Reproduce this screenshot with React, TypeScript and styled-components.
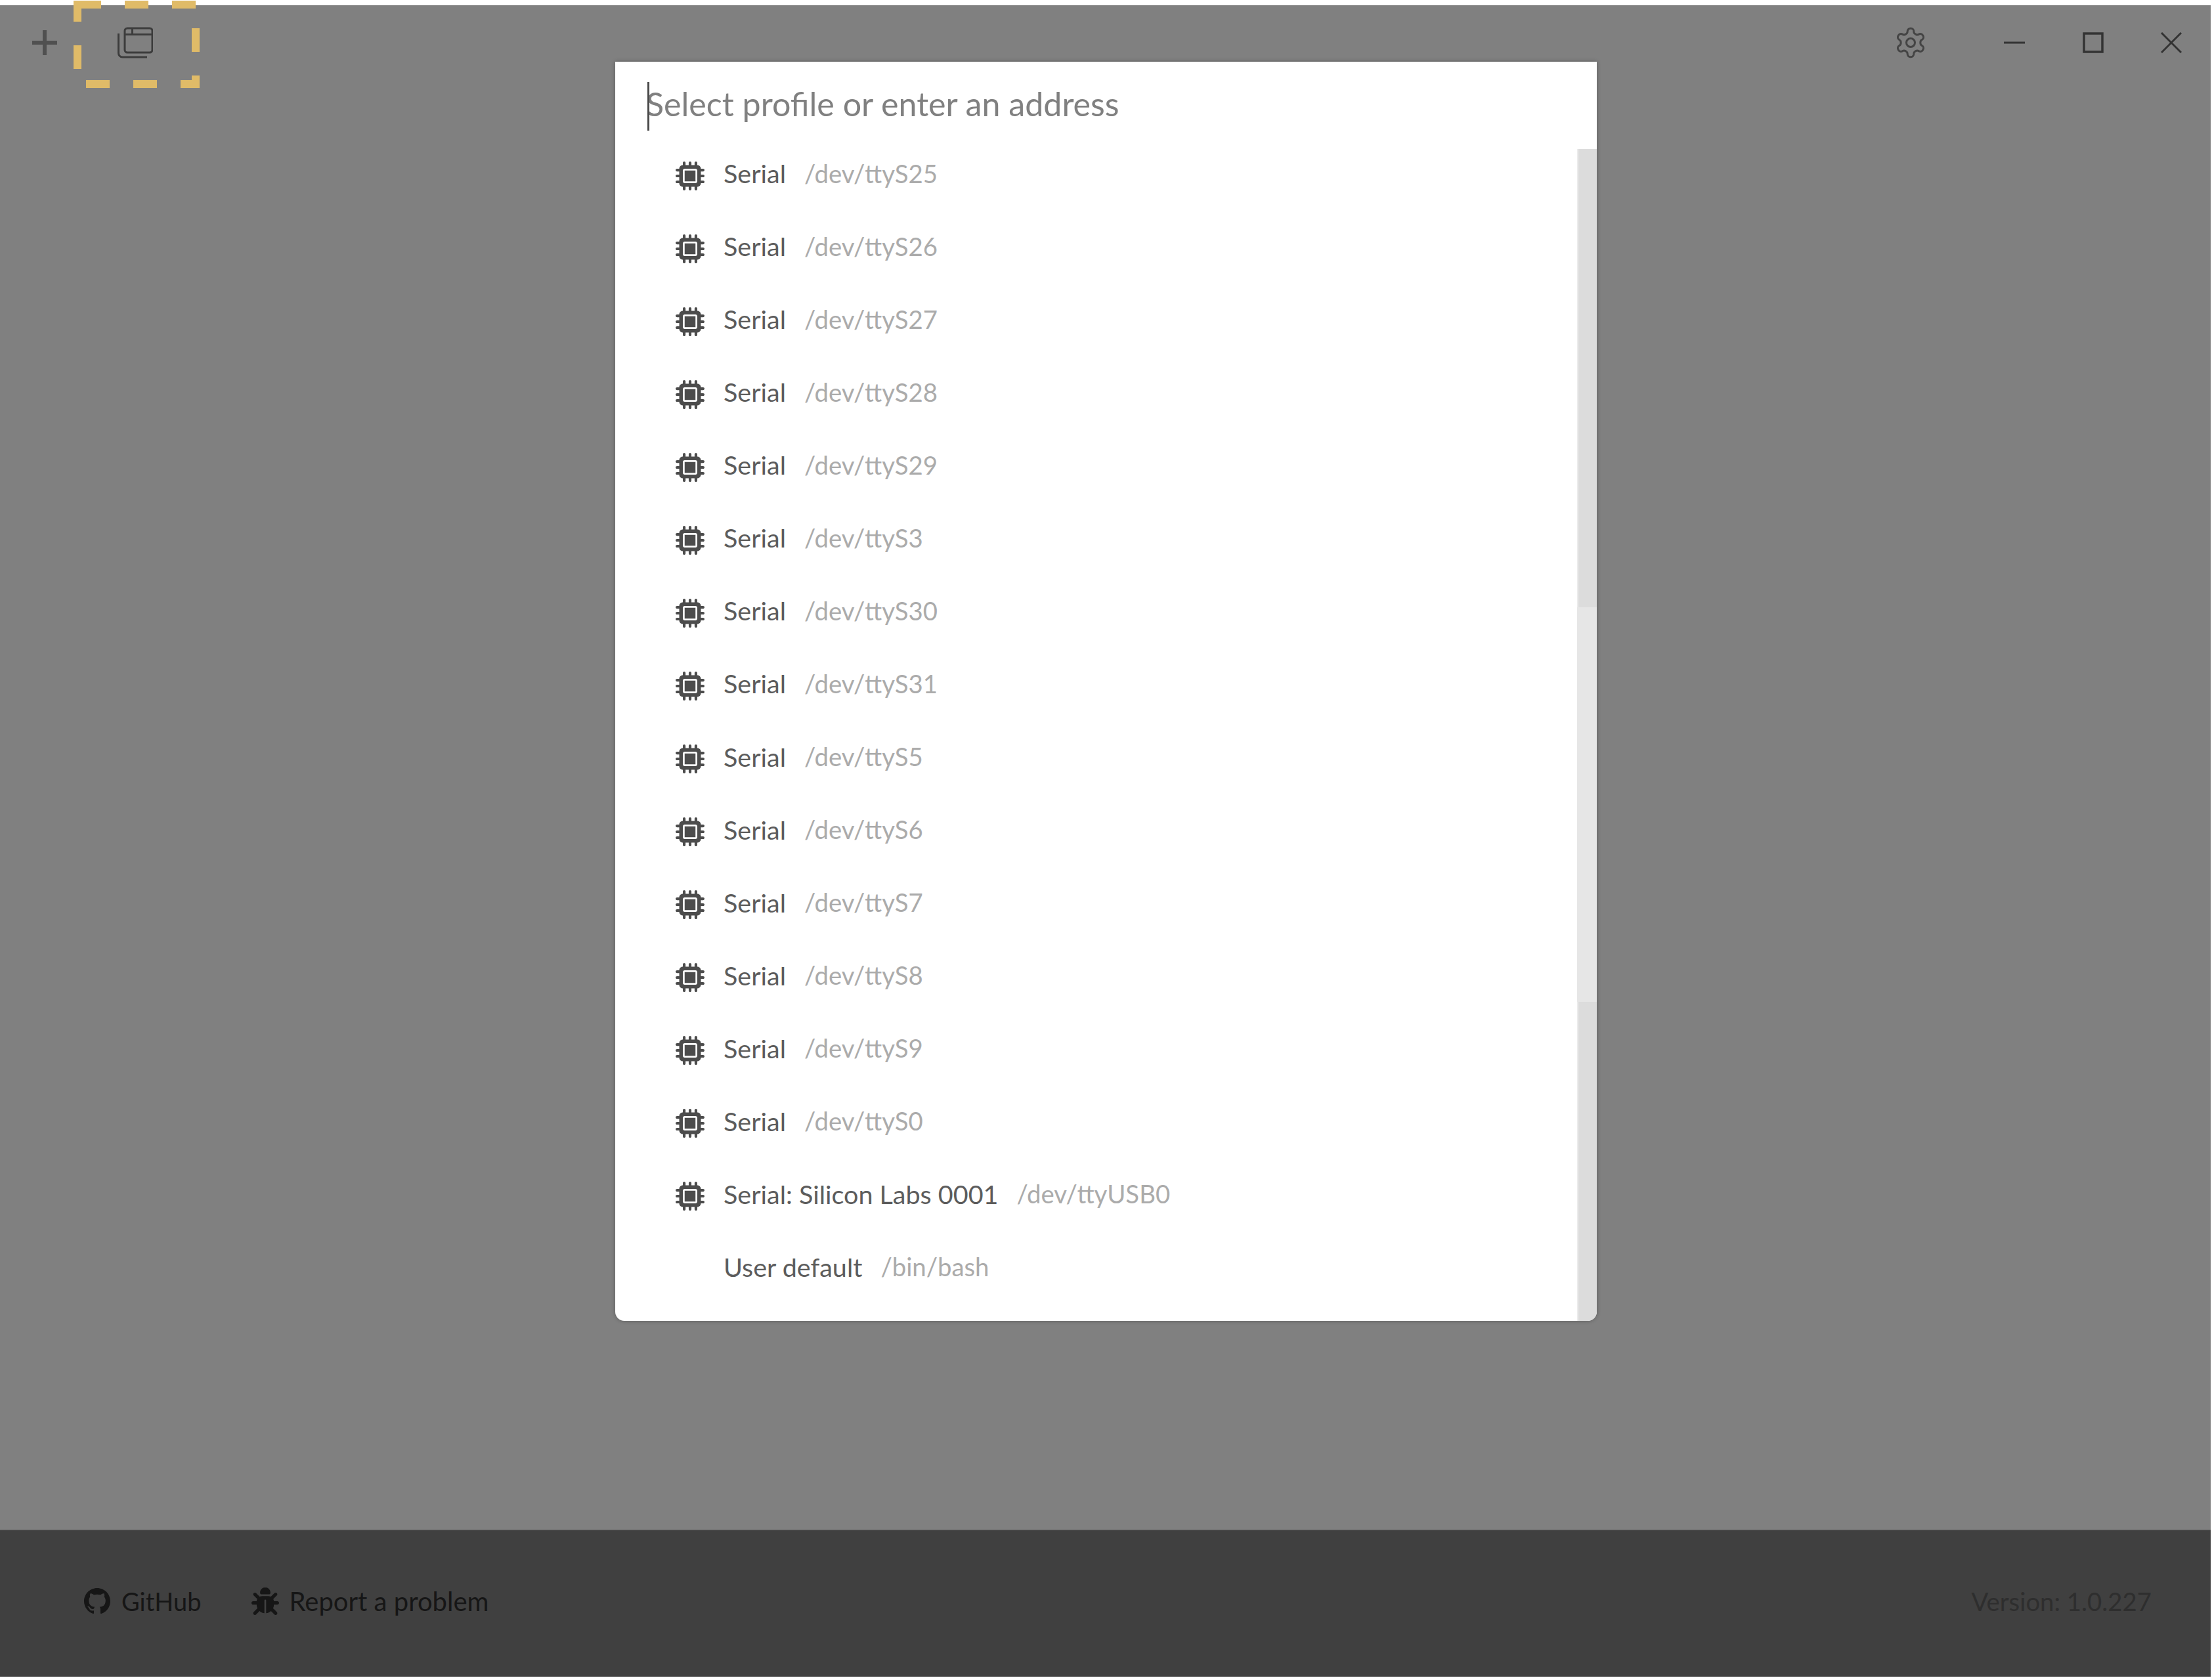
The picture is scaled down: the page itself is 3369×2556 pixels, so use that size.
import React from 'react';
import styled, { createGlobalStyle } from 'styled-components';
import { FaMicrochip, FaBug } from 'react-icons/fa6';
import { LuSettings } from 'react-icons/lu';

const FONT = `"Lato", "Noto Sans", sans-serif`;

const profiles = [
    ['Serial', '/dev/ttyS25'],
    ['Serial', '/dev/ttyS26'],
    ['Serial', '/dev/ttyS27'],
    ['Serial', '/dev/ttyS28'],
    ['Serial', '/dev/ttyS29'],
    ['Serial', '/dev/ttyS3'],
    ['Serial', '/dev/ttyS30'],
    ['Serial', '/dev/ttyS31'],
    ['Serial', '/dev/ttyS5'],
    ['Serial', '/dev/ttyS6'],
    ['Serial', '/dev/ttyS7'],
    ['Serial', '/dev/ttyS8'],
    ['Serial', '/dev/ttyS9'],
    ['Serial', '/dev/ttyS0'],
    ['Serial: Silicon Labs 0001', '/dev/ttyUSB0'],
];

export default function App() {
    return (
        <>
            <GlobalStyle />
            <AppWindow>
                <Toolbar>
                    <PlusButton>
                        <svg width="38" height="38" viewBox="0 0 38 38">
                            <path d="M19 0V38M0 19H38" stroke="#505050" strokeWidth="6" />
                        </svg>
                    </PlusButton>
                    <TabsButton>
                        <svg width="54" height="48" viewBox="0 0 54 48" fill="none" stroke="#3c3c3c" strokeWidth="3">
                            <rect x="11" y="2" width="42" height="37" rx="4" />
                            <path d="M11 11.5H53M22.5 2V11.5" />
                            <path d="M1.5 10V40a6 6 0 0 0 6 6H45" />
                        </svg>
                    </TabsButton>
                    <Spacer />
                    <GearButton>
                        <LuSettings size={52} strokeWidth={1.4} color="#444" />
                    </GearButton>
                    <ControlButton>
                        <svg width="32" height="4" viewBox="0 0 32 4">
                            <path d="M0 2H32" stroke="#333" strokeWidth="3" />
                        </svg>
                    </ControlButton>
                    <ControlButton>
                        <svg width="32" height="32" viewBox="0 0 32 32" fill="none">
                            <rect x="2" y="2" width="28" height="28" stroke="#333" strokeWidth="3.5" />
                        </svg>
                    </ControlButton>
                    <ControlButton>
                        <svg width="32" height="32" viewBox="0 0 32 32" fill="none">
                            <path d="M1 1L31 31M31 1L1 31" stroke="#333" strokeWidth="3" />
                        </svg>
                    </ControlButton>
                </Toolbar>
                <Content />
                <Footer>
                    <FooterLink $size={38} $gap={17}>
                        <svg width="40" height="40" viewBox="0 0 16 16" fill="currentColor">
                            <path d="M8 0C3.58 0 0 3.58 0 8c0 3.54 2.29 6.53 5.47 7.59.4.07.55-.17.55-.38 0-.19-.01-.82-.01-1.49-2.01.37-2.53-.49-2.69-.94-.09-.23-.48-.94-.82-1.13-.28-.15-.68-.52-.01-.53.63-.01 1.08.58 1.23.82.72 1.21 1.87.87 2.33.66.07-.52.28-.87.51-1.07-1.78-.2-3.64-.89-3.64-3.95 0-.87.31-1.59.82-2.15-.08-.2-.36-1.02.08-2.12 0 0 .67-.21 2.2.82.64-.18 1.32-.27 2-.27.68 0 1.36.09 2 .27 1.53-1.04 2.2-.82 2.2-.82.44 1.1.16 1.92.08 2.12.51.56.82 1.27.82 2.15 0 3.07-1.87 3.75-3.65 3.95.29.25.54.73.54 1.48 0 1.07-.01 1.93-.01 2.2 0 .21.15.46.55.38A8.013 8.013 0 0016 8c0-4.42-3.58-8-8-8z" />
                        </svg>
                        GitHub
                    </FooterLink>
                    <FooterLink $size={40} $gap={16}>
                        <FaBug size={42} />
                        Report a problem
                    </FooterLink>
                    <Spacer />
                    <Version>Version: 1.0.227</Version>
                </Footer>
                <Modal>
                    <QueryBar>
                        <Caret />
                        Select profile or enter an address
                    </QueryBar>
                    <ModalBody>
                        <ProfileList>
                            <ProfileRows>
                                {profiles.map(([name, path]) => (
                                    <ProfileRow key={path}>
                                        <ChipSlot>
                                            <FaMicrochip size={44} />
                                        </ChipSlot>
                                        <ProfileName>{name}</ProfileName>
                                        <ProfilePath>{path}</ProfilePath>
                                    </ProfileRow>
                                ))}
                                <ProfileRow>
                                    <ChipSlot />
                                    <ProfileName>User default</ProfileName>
                                    <ProfilePath>/bin/bash</ProfilePath>
                                </ProfileRow>
                            </ProfileRows>
                        </ProfileList>
                        <ScrollTrack>
                            <ScrollThumb />
                        </ScrollTrack>
                    </ModalBody>
                </Modal>
            </AppWindow>
            <HighlightFrame width="192" height="134" viewBox="0 0 192 134" fill="none">
                <rect x="6" y="6" width="180" height="121" stroke="#e0bb68" strokeWidth="12" strokeDasharray="36 36" />
            </HighlightFrame>
        </>
    );
}

const GlobalStyle = createGlobalStyle`
    html, body {
        margin: 0;
        padding: 0;
        background: #fff;
    }
`

const AppWindow = styled.div`
    position: relative;
    display: flex;
    flex-direction: column;
    width: 3367px;
    height: 2546px;
    margin-top: 8px;
    background: #808080;
    font-family: ${FONT};
`
const Toolbar = styled.div`
    display: flex;
    align-items: center;
    height: 114px;
    padding-left: 30px;
`
const IconButton = styled.div`
    display: flex;
    align-items: center;
    justify-content: center;
    height: 100%;
`
const PlusButton = styled(IconButton)`
    width: 76px;
`
const TabsButton = styled(IconButton)`
    width: 120px;
    margin-left: 40px;
`
const GearButton = styled(IconButton)`
    width: 120px;
    margin-right: 39px;
`
const ControlButton = styled(IconButton)`
    width: 119.5px;
`
const Spacer = styled.div`
    flex: 1;
`
const Content = styled.div`
    flex: 1;
`
const Footer = styled.div`
    display: flex;
    align-items: center;
    gap: 76px;
    height: 224px;
    padding: 0 90px 7px 128px;
    background: #404040;
    border-top: 1px solid #606060;
    box-sizing: border-box;
`
const FooterLink = styled.div<{ $size: number; $gap: number }>`
    display: flex;
    align-items: center;
    gap: ${p => p.$gap}px;
    font-size: ${p => p.$size}px;
    color: #161616;
`
const Version = styled.div`
    font-size: 38.3px;
    color: #2e2e2e;
`
const Modal = styled.div`
    position: absolute;
    top: 86px;
    left: 937px;
    display: flex;
    flex-direction: column;
    width: 1495px;
    height: 1918px;
    background: #fff;
    border-radius: 0 0 14px 14px;
    box-shadow: 0 0 6px rgba(0, 0, 0, 0.3);
    overflow: hidden;
`
const QueryBar = styled.div`
    position: relative;
    flex: none;
    display: flex;
    align-items: center;
    height: 133px;
    padding: 0 0 6px 47px;
    box-sizing: border-box;
    font-size: 50.15px;
    color: #808080;
`
const Caret = styled.span`
    position: absolute;
    left: 49px;
    top: 31px;
    width: 3px;
    height: 74px;
    background: #4a4a4a;
`
const ModalBody = styled.div`
    flex: 1;
    display: flex;
    min-height: 0;
`
const ProfileList = styled.div`
    flex: 1;
    overflow: hidden;
`
const ProfileRows = styled.div`
    margin-top: -19px;
`
const ProfileRow = styled.div`
    display: flex;
    align-items: center;
    height: 111.07px;
    font-size: 38.3px;
`
const ChipSlot = styled.div`
    display: flex;
    align-items: center;
    justify-content: center;
    width: 44px;
    height: 44px;
    margin: 8px 29px 0 92px;
    color: #4c4c4c;
`
const ProfileName = styled.span`
    font-size: 39.5px;
    color: #5c5c5c;
`
const ProfilePath = styled.span`
    margin-left: 28px;
    color: #ababab;
`
const ScrollTrack = styled.div`
    flex: none;
    width: 30px;
    padding-top: 698px;
    box-sizing: border-box;
    background: #dcdcdc;
    box-shadow: inset 2px 0 0 #ececec;
`
const ScrollThumb = styled.div`
    height: 601px;
    background: #e6e6e6;
`
const HighlightFrame = styled.svg`
    position: absolute;
    top: 1px;
    left: 112px;
`
